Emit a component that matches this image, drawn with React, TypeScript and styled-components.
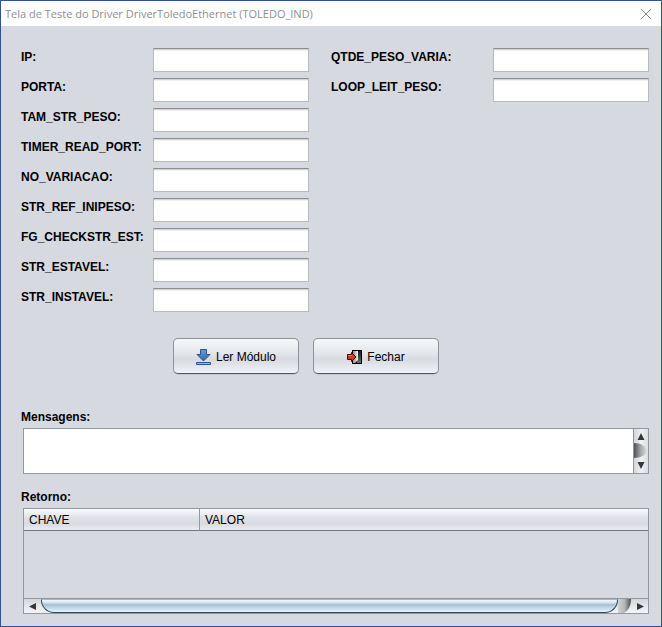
import React from "react";
import styled, { createGlobalStyle } from "styled-components";

const GlobalStyle = createGlobalStyle`
  * { box-sizing: border-box; }
  html, body, #root { height: 100%; }
  body { margin: 0; }
`;

const Window = styled.div`
  display: flex;
  flex-direction: column;
  min-height: 100%;
  border: 1px solid #2f5496;
  background: #d6d9e0;
  color: #000;
  font: 12px/16px "Liberation Sans", Arial, sans-serif;
`;

const TitleBar = styled.header`
  display: flex;
  align-items: center;
  justify-content: space-between;
  height: 25px;
  padding: 0 9px 0 4px;
  background: #fff;
`;

const Title = styled.h1`
  margin: 0;
  color: #8f8f8f;
  font: 11px/24px "Open Sans", "Noto Sans", sans-serif;
`;

const CloseButton = styled.button`
  display: flex;
  padding: 0;
  border: 0;
  background: none;
`;

const Content = styled.main`
  display: flex;
  flex: 1;
  flex-direction: column;
  padding: 22px 12px 12px 20px;
`;

const Fields = styled.form`
  display: flex;
  align-items: flex-start;
  gap: 22px;
`;

const FieldColumn = styled.div<{ $label: number }>`
  display: grid;
  flex: 1 1 ${(p) => p.$label}px;
  grid-template-columns: ${(p) => p.$label}px minmax(0, 1fr);
  row-gap: 6px;
`;

const FieldLabel = styled.label`
  height: 24px;
  line-height: 18px;
  font-weight: bold;
  white-space: nowrap;
`;

const TextInput = styled.input`
  width: 100%;
  height: 24px;
  padding: 0 6px;
  border: 1px solid #b8babe;
  border-top-color: #8d8e91;
  border-radius: 0;
  outline: 0;
  background: #fff;
  box-shadow: inset 0 1px #d3d3d4, inset 0 2px #f2f2f2;
  font: inherit;
`;

const Actions = styled.div`
  display: flex;
  justify-content: center;
  gap: 14px;
  margin: 26px 58px 34px 0;
`;

const ActionButton = styled.button`
  display: flex;
  align-items: center;
  justify-content: center;
  gap: 4px;
  width: 126px;
  height: 36px;
  padding: 2px 0 0;
  border: 1px solid #8e9197;
  border-bottom-color: #55585e;
  border-radius: 5px;
  background: linear-gradient(#f7f8fa, #e2e4e8 45%, #d7dadf 60%, #f0f2f7);
  box-shadow: 0 1px #c3c6cd;
  color: #000;
  font: inherit;
`;

const SectionLabel = styled.label`
  line-height: 18px;
  font-weight: bold;
`;

const SectionHeading = styled.h2`
  margin: 0;
  font-size: 12px;
  line-height: 18px;
`;

const MessageBox = styled.div`
  display: flex;
  height: 46px;
  margin: 2px 0 14px 2px;
  border: 1px solid #9297a1;
`;

const MessageText = styled.textarea`
  flex: 1;
  min-width: 0;
  padding: 4px;
  border: 0;
  outline: 0;
  resize: none;
  overflow: hidden;
  background: #fff;
  font: inherit;
`;

const VerticalBar = styled.div`
  display: flex;
  width: 15px;
  border-left: 1px solid #9297a1;
`;

const ResultBox = styled.section`
  display: flex;
  flex: 1;
  flex-direction: column;
  justify-content: space-between;
  min-height: 80px;
  margin: 2px 0 0 2px;
  border: 1px solid #9297a1;
`;

const ResultTable = styled.table`
  width: 100%;
  border-collapse: separate;
  border-spacing: 0;
  table-layout: fixed;
`;

const HeadCell = styled.th<{ $width?: string }>`
  width: ${(p) => p.$width ?? "auto"};
  height: 22px;
  padding: 0 5px;
  border-right: ${(p) => (p.$width ? "1px solid #9297a1" : "0")};
  border-bottom: 1px solid #75797f;
  background: linear-gradient(#fafbfd, #e0e2e7 40%, #d8dadf 70%, #eaecf5);
  font-weight: normal;
  text-align: left;
`;

const HorizontalBar = styled.div`
  display: flex;
  height: 15px;
  border-top: 1px solid #9297a1;
  background: linear-gradient(#d3d5d9, #e6e7e9 50%, #f3f4f6);
`;

const ScrollThumb = styled.div`
  flex: 1;
  border: 1px solid #2f495e;
  border-top-color: #a9b8c6;
  border-radius: 1px 1px 13px 13px;
  background: linear-gradient(#f4f8fb, #dbe6ef 20%, #a9bfd3 40%, #bdd2e2 60%, #e0f6fc);
`;

const leftFields = [
  "IP",
  "PORTA",
  "TAM_STR_PESO",
  "TIMER_READ_PORT",
  "NO_VARIACAO",
  "STR_REF_INIPESO",
  "FG_CHECKSTR_EST",
  "STR_ESTAVEL",
  "STR_INSTAVEL",
];
const rightFields = ["QTDE_PESO_VARIA", "LOOP_LEIT_PESO"];

function FieldGroup({ names, label }: { names: string[]; label: number }) {
  return (
    <FieldColumn $label={label}>
      {names.map((name) => (
        <React.Fragment key={name}>
          <FieldLabel htmlFor={name}>{name}:</FieldLabel>
          <TextInput id={name} type="text" />
        </React.Fragment>
      ))}
    </FieldColumn>
  );
}

function DownloadIcon() {
  return (
    <svg width="16" height="16" viewBox="0 0 16 16" aria-hidden="true">
      <defs>
        <linearGradient id="arrow" x2="0" y2="1">
          <stop stopColor="#6b9bd0" />
          <stop offset="1" stopColor="#3467ab" />
        </linearGradient>
      </defs>
      <path d="M4.500.5h6v5H14L7.500 12 1 5.500h3.500z" fill="url(#arrow)" stroke="#2a5590" />
      <path d="M.5 13.500h14v2H.5z" fill="#8dbbe8" stroke="#2a5590" />
    </svg>
  );
}

function ExitIcon() {
  return (
    <svg width="16" height="16" viewBox="0 0 16 16" aria-hidden="true">
      <defs>
        <linearGradient id="door">
          <stop stopColor="#8d8d8d" />
          <stop offset="1" stopColor="#f4f4f4" />
        </linearGradient>
        <linearGradient id="opening" x2="0" y2="1">
          <stop stopColor="#151816" />
          <stop offset="1" stopColor="#66766a" />
        </linearGradient>
      </defs>
      <path d="M5 1h10v14H5z" fill="#000" />
      <path d="M10 2h4v12h-4z" fill="url(#opening)" />
      <path d="M6 2h5v9l-3 3H6z" fill="url(#door)" />
      <path d="M.5 5.500h4v-2L9 8l-4.500 4.500v-2h-4z" fill="#dc3424" stroke="#3a0906" />
      <path d="M1 6.500h4" stroke="#f07a62" />
    </svg>
  );
}

function CloseIcon() {
  return (
    <svg width="12" height="12" viewBox="0 0 12 12" aria-hidden="true">
      <path d="M1 1l10 10M11 1L1 11" stroke="#8a8a8a" fill="none" />
    </svg>
  );
}

function VerticalScroll() {
  return (
    <svg width="14" height="44" viewBox="0 0 14 44" aria-hidden="true">
      <defs>
        <linearGradient id="vtrack">
          <stop stopColor="#d2d4d7" />
          <stop offset=".5" stopColor="#f0f1f2" />
          <stop offset="1" stopColor="#dcdee1" />
        </linearGradient>
        <linearGradient id="vthumb">
          <stop stopColor="#4e4f52" />
          <stop offset=".5" stopColor="#a4a5a8" />
          <stop offset="1" stopColor="#dedfe1" />
        </linearGradient>
      </defs>
      <path d="M0 0h14v44H0z" fill="url(#vtrack)" />
      <path d="M0 14c7 0 12 3 13 8-1 4-6 7-13 7z" fill="url(#vthumb)" />
      <path d="M7 4l3.500 7h-7zM7 40l3.500-7h-7z" fill="#35373a" />
    </svg>
  );
}

function LeftArrow() {
  return (
    <svg width="17" height="14" viewBox="0 0 17 14" aria-hidden="true">
      <path d="M12 4L5 7.500l7 3.500z" fill="#35373a" />
    </svg>
  );
}

function RightArrow() {
  return (
    <svg width="30" height="14" viewBox="0 0 30 14" aria-hidden="true">
      <defs>
        <linearGradient id="trough">
          <stop stopColor="#d0d2d5" />
          <stop offset=".5" stopColor="#b5b6b9" />
          <stop offset="1" stopColor="#4e4f52" />
        </linearGradient>
      </defs>
      <path d="M0 0h13c0 6-2 11-7 14H0z" fill="url(#trough)" />
      <path d="M19 4l7 3.500-7 3.500z" fill="#35373a" />
    </svg>
  );
}

export default function App() {
  return (
    <>
      <GlobalStyle />
      <Window>
        <TitleBar>
          <Title>Tela de Teste do Driver DriverToledoEthernet (TOLEDO_IND)</Title>
          <CloseButton type="button" aria-label="Fechar janela">
            <CloseIcon />
          </CloseButton>
        </TitleBar>
        <Content>
          <Fields>
            <FieldGroup names={leftFields} label={132} />
            <FieldGroup names={rightFields} label={162} />
          </Fields>
          <Actions>
            <ActionButton type="button">
              <DownloadIcon />
              Ler Módulo
            </ActionButton>
            <ActionButton type="button">
              <ExitIcon />
              Fechar
            </ActionButton>
          </Actions>
          <SectionLabel htmlFor="mensagens">Mensagens:</SectionLabel>
          <MessageBox>
            <MessageText id="mensagens" />
            <VerticalBar>
              <VerticalScroll />
            </VerticalBar>
          </MessageBox>
          <SectionHeading id="retorno">Retorno:</SectionHeading>
          <ResultBox>
            <ResultTable aria-labelledby="retorno">
              <thead>
                <tr>
                  <HeadCell $width="176px">CHAVE</HeadCell>
                  <HeadCell>VALOR</HeadCell>
                </tr>
              </thead>
            </ResultTable>
            <HorizontalBar>
              <LeftArrow />
              <ScrollThumb />
              <RightArrow />
            </HorizontalBar>
          </ResultBox>
        </Content>
      </Window>
    </>
  );
}
